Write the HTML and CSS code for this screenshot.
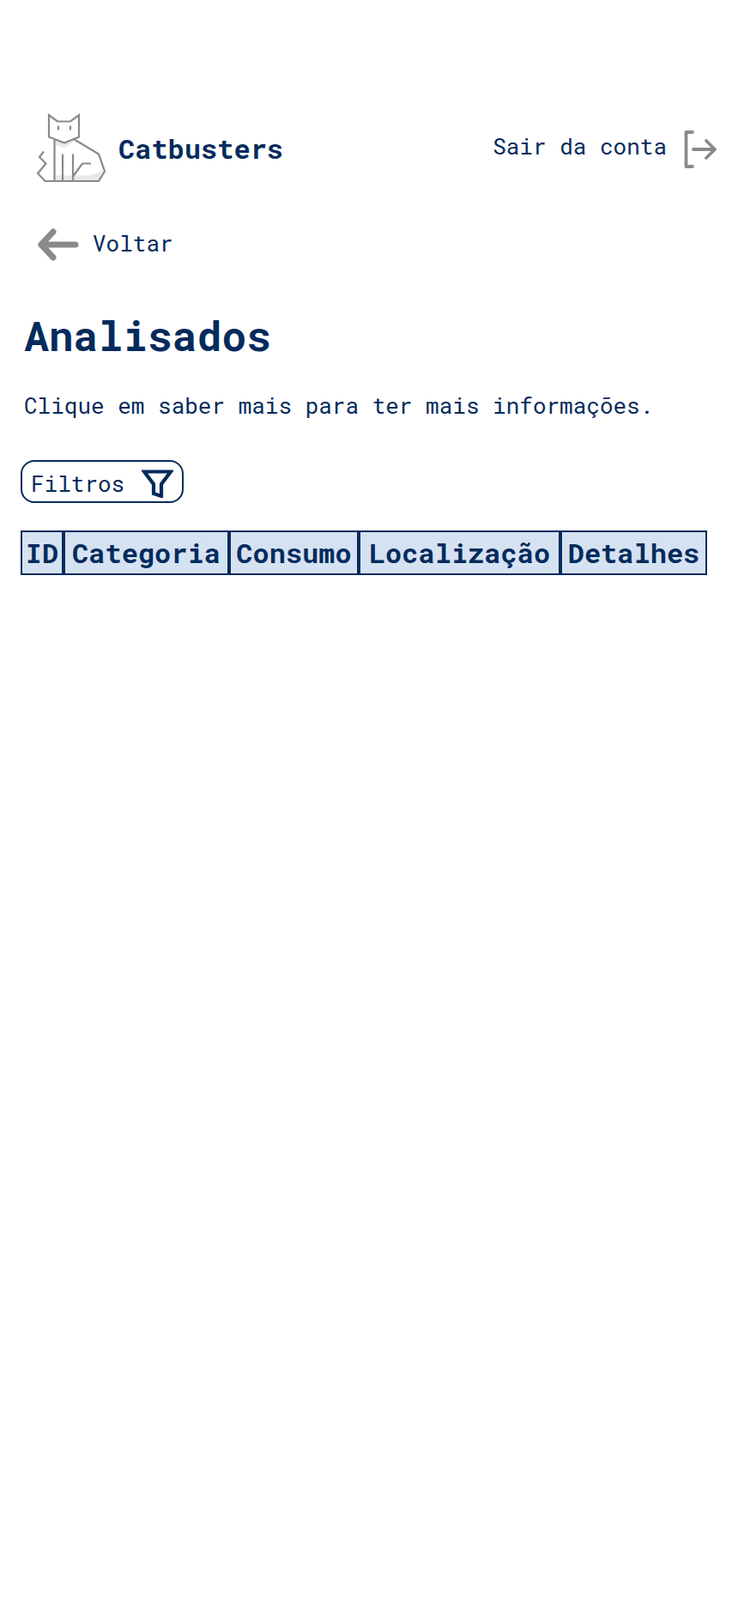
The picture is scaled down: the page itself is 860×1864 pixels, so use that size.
FILE: index.html
```html
<!DOCTYPE html>
<html lang="en">
<head>
    <meta charset="UTF-8">
    <meta name="viewport" content="width=device-width, initial-scale=1.0">
    <title>Analisados</title>
    <link rel="stylesheet" href="styles.css">
</head>
<body>
    <header class="topbar">
        <div class="brand">
            <svg class="logo" viewBox="0 0 80 80" fill="none">
                <path d="M21 31L32 35L46 30L32 40L21 36Z" fill="#e8e8e8"/>
                <path d="M21 72H62L77 66L72 78H21Z" fill="#e8e8e8"/>
                <g stroke="#8a8a8a" stroke-width="2.2">
                    <path d="M14 1.500V27L32 34L49 27V1.500L39 9H24Z"/>
                    <path d="M25 14V19M39 14V19"/>
                    <path d="M20.500 30V78.500M30 47V78.500M42 47V78.500"/>
                    <path d="M42 29L72 47L79 67L72 78.500H9.500L1 69.500L10.500 58L3 50.500L8 44"/>
                    <path d="M42 73L53 58H63"/>
                </g>
            </svg>
            <span class="brand-name">Catbusters</span>
        </div>
        <a class="logout" href="#">
            <span>Sair da conta</span>
            <svg class="logout-icon" viewBox="0 0 38 44" fill="none" stroke="#8a8a8a" stroke-width="3.8" stroke-linecap="round" stroke-linejoin="round">
                <path d="M10 2H2.500V42H10"/>
                <path d="M11 22H36M26 12L36 22L26 32"/>
            </svg>
        </a>
    </header>

    <a class="back" href="#">
        <svg class="back-icon" viewBox="0 0 48 38" fill="none" stroke="#8a8a8a" stroke-width="7" stroke-linecap="round" stroke-linejoin="round">
            <path d="M4 19H44M18 4L4 19L18 34"/>
        </svg>
        <span>Voltar</span>
    </a>

    <main class="content">
        <h1>Analisados</h1>
        <p class="hint">Clique em saber mais para ter mais informações.</p>

        <button class="filter-btn" type="button">
            <span>Filtros</span>
            <svg class="filter-icon" viewBox="0 0 37 33" fill="none" stroke="#042b5c" stroke-width="4.2">
                <path d="M3 2.500H34L23 17V31L14 28V17Z"/>
            </svg>
        </button>

        <table class="data-table">
            <thead>
                <tr>
                    <th class="col-id">ID</th>
                    <th class="col-category">Categoria</th>
                    <th class="col-usage">Consumo</th>
                    <th class="col-place">Localização</th>
                    <th class="col-details">Detalhes</th>
                </tr>
            </thead>
        </table>
    </main>
</body>
</html>
```

FILE: styles.css
```css
* {
    box-sizing: border-box;
}

body {
    margin: 0;
    min-height: 1864px;
    background-color: #fff;
    color: #042b5c;
    font-family: "Roboto Mono", "DejaVu Sans Mono", "Liberation Mono", monospace;
    font-size: 26px;
}

a {
    color: inherit;
    text-decoration: none;
}

.topbar {
    display: flex;
    justify-content: space-between;
    align-items: center;
    padding: 132px 24px 0 43px;
}

.brand {
    display: flex;
    align-items: center;
    gap: 15px;
}

.logo {
    width: 80px;
    height: 81px;
}

.brand-name {
    font-size: 32px;
    font-weight: 700;
}

.logout {
    display: flex;
    align-items: center;
    gap: 20px;
    margin-right: 1px;
    margin-top: -6px;
}

.logout-icon {
    width: 38px;
    height: 44px;
    margin-top: 8px;
}

.back {
    display: flex;
    align-items: center;
    gap: 16px;
    margin: 48px 0 0 44px;
}

.back-icon {
    width: 48px;
    height: 38px;
    margin-top: 5px;
}

.content {
    padding: 0 24px;
}

h1 {
    margin: 55px 0 0 4px;
    font-size: 48px;
    font-weight: 700;
    line-height: 64px;
}

.hint {
    margin: 32px 0 0 4px;
    line-height: 34px;
}

.filter-btn {
    display: flex;
    align-items: center;
    gap: 20px;
    width: 190px;
    height: 50px;
    margin-top: 47px;
    padding: 4px 10px 0;
    background: #fff;
    border: 2px solid #042b5c;
    border-radius: 16px;
    color: inherit;
    font: inherit;
}

.filter-icon {
    width: 37px;
    height: 33px;
    flex: none;
}

.data-table {
    margin-top: 32px;
    width: 800px;
    table-layout: fixed;
    border-collapse: separate;
    border-spacing: 0;
}

.data-table th {
    height: 52px;
    padding: 0 0 2px;
    background-color: #d5e2f2;
    border: 2px solid #042b5c;
    font-size: 32px;
    font-weight: 700;
}

.col-id {
    width: 50px;
}

.col-category {
    width: 193px;
}

.col-usage {
    width: 151px;
}

.col-place {
    width: 235px;
}

.col-details {
    width: 171px;
}
```
